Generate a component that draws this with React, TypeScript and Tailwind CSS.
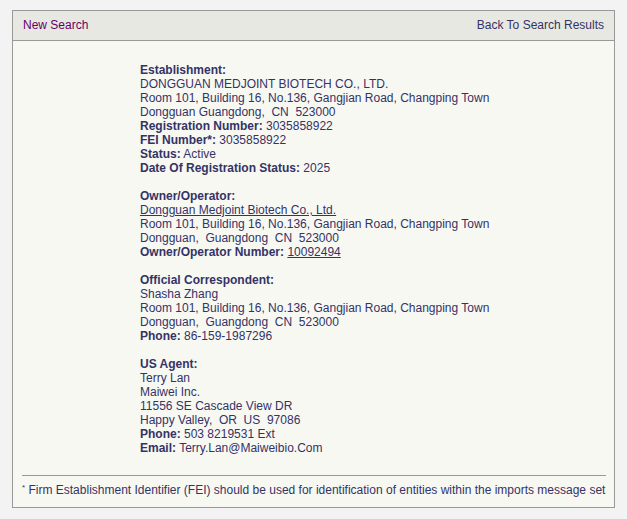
import React from 'react';

const Label: React.FC<{ children: React.ReactNode }> = ({ children }) => (
    <span className="font-bold">{children}</span>
);

const Line: React.FC<{ children: React.ReactNode }> = ({ children }) => (
    <div className="whitespace-pre">{children}</div>
);

const App: React.FC = () => {
    return (
        <div className="min-h-[519px] bg-[#f3f3f3] pt-[10px] pl-[12px] font-['Liberation_Sans',Arial,sans-serif] text-[12px] leading-[14px] text-[#333366]">
            <div className="w-[603px] border border-[#999999] bg-[#f8f8f3]">
                <div className="flex h-[30px] items-center justify-between border-b border-[#999999] bg-[#e8e8e3] px-[10px] pb-[2px]">
                    <a href="#" className="text-[#660066]">New Search</a>
                    <a href="#" className="text-[#333366]">Back To Search Results</a>
                </div>

                <div className="pl-[127px] pt-[22px]">
                    <div>
                        <Line><Label>Establishment:</Label></Line>
                        <Line>DONGGUAN MEDJOINT BIOTECH CO., LTD.</Line>
                        <Line>Room 101, Building 16, No.136, Gangjian Road, Changping Town</Line>
                        <Line>Dongguan Guangdong,  CN  523000</Line>
                        <Line><Label>Registration Number:</Label> 3035858922</Line>
                        <Line><Label>FEI Number*:</Label> 3035858922</Line>
                        <Line><Label>Status:</Label> Active</Line>
                        <Line><Label>Date Of Registration Status:</Label> 2025</Line>
                    </div>

                    <div className="mt-[14px]">
                        <Line><Label>Owner/Operator:</Label></Line>
                        <Line><a href="#" className="underline">Dongguan Medjoint Biotech Co., Ltd.</a></Line>
                        <Line>Room 101, Building 16, No.136, Gangjian Road, Changping Town</Line>
                        <Line>Dongguan,  Guangdong  CN  523000</Line>
                        <Line><Label>Owner/Operator Number:</Label> <a href="#" className="underline">10092494</a></Line>
                    </div>

                    <div className="mt-[14px]">
                        <Line><Label>Official Correspondent:</Label></Line>
                        <Line>Shasha Zhang</Line>
                        <Line>Room 101, Building 16, No.136, Gangjian Road, Changping Town</Line>
                        <Line>Dongguan,  Guangdong  CN  523000</Line>
                        <Line><Label>Phone:</Label> 86-159-1987296</Line>
                    </div>

                    <div className="mt-[14px]">
                        <Line><Label>US Agent:</Label></Line>
                        <Line>Terry Lan</Line>
                        <Line>Maiwei Inc.</Line>
                        <Line>11556 SE Cascade View DR</Line>
                        <Line>Happy Valley,  OR  US  97086</Line>
                        <Line><Label>Phone:</Label> 503 8219531 Ext</Line>
                        <Line><Label>Email:</Label> Terry.Lan@Maiweibio.Com</Line>
                    </div>
                </div>

                <div className="ml-[9px] mr-[8px] mt-[20px] border-t border-[#999999] pt-[7px] pb-[10px]">
                    <div className="whitespace-nowrap">
                        <sup className="text-[8px]">*</sup> Firm Establishment Identifier (FEI) should be used for identification of entities within the imports message set
                    </div>
                </div>
            </div>
        </div>
    );
};

export default App;
